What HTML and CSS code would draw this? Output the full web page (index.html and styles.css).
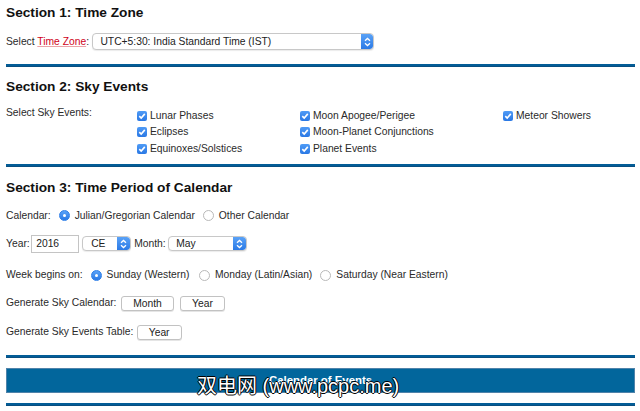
FILE: index.html
```
<!DOCTYPE html>
<html>
<head>
<meta charset="utf-8">
<link rel="stylesheet" href="styles.css">
</head>
<body>
<div class="page">
  <h2 class="h h1">Section 1: Time Zone</h2>
  <div class="row tz-row">
    <span class="txt">Select <a class="link" href="#">Time Zone</a>:</span>
    <div class="sel sel-tz"><span class="sel-text">UTC+5:30: India Standard Time (IST)</span><span class="arrow"><svg width="7" height="10" viewBox="0 0 7 10"><path d="M1 3.8 L3.5 1.5 L6 3.8 M1 6.2 L3.5 8.5 L6 6.2" fill="none" stroke="#fff" stroke-width="1.3"/></svg></span></div>
  </div>
  <div class="rule r1"></div>

  <h2 class="h h2">Section 2: Sky Events</h2>
  <div class="sky">
    <div class="sky-label txt">Select Sky Events:</div>
    <div class="sky-grid">
      <label class="cb"><span class="box"><svg width="10" height="10" viewBox="0 0 10 10"><path d="M2.3 5.1 L4.2 7 L7.8 2.9" fill="none" stroke="#fff" stroke-width="1.6"/></svg></span>Lunar Phases</label>
      <label class="cb"><span class="box"><svg width="10" height="10" viewBox="0 0 10 10"><path d="M2.3 5.1 L4.2 7 L7.8 2.9" fill="none" stroke="#fff" stroke-width="1.6"/></svg></span>Moon Apogee/Perigee</label>
      <label class="cb"><span class="box"><svg width="10" height="10" viewBox="0 0 10 10"><path d="M2.3 5.1 L4.2 7 L7.8 2.9" fill="none" stroke="#fff" stroke-width="1.6"/></svg></span>Meteor Showers</label>
      <label class="cb"><span class="box"><svg width="10" height="10" viewBox="0 0 10 10"><path d="M2.3 5.1 L4.2 7 L7.8 2.9" fill="none" stroke="#fff" stroke-width="1.6"/></svg></span>Eclipses</label>
      <label class="cb"><span class="box"><svg width="10" height="10" viewBox="0 0 10 10"><path d="M2.3 5.1 L4.2 7 L7.8 2.9" fill="none" stroke="#fff" stroke-width="1.6"/></svg></span>Moon-Planet Conjunctions</label>
      <span></span>
      <label class="cb"><span class="box"><svg width="10" height="10" viewBox="0 0 10 10"><path d="M2.3 5.1 L4.2 7 L7.8 2.9" fill="none" stroke="#fff" stroke-width="1.6"/></svg></span>Equinoxes/Solstices</label>
      <label class="cb"><span class="box"><svg width="10" height="10" viewBox="0 0 10 10"><path d="M2.3 5.1 L4.2 7 L7.8 2.9" fill="none" stroke="#fff" stroke-width="1.6"/></svg></span>Planet Events</label>
    </div>
  </div>
  <div class="rule r2"></div>

  <h2 class="h h3">Section 3: Time Period of Calendar</h2>
  <div class="row cal-row">
    <span class="txt">Calendar:</span>
    <span class="radio on"></span><span class="txt">Julian/Gregorian Calendar</span>
    <span class="radio"></span><span class="txt">Other Calendar</span>
  </div>
  <div class="row year-row">
    <span class="txt">Year:</span>
    <div class="input txt">2016</div>
    <div class="sel sel-ce"><span class="sel-text">CE</span><span class="arrow"><svg width="7" height="10" viewBox="0 0 7 10"><path d="M1 3.8 L3.5 1.5 L6 3.8 M1 6.2 L3.5 8.5 L6 6.2" fill="none" stroke="#fff" stroke-width="1.3"/></svg></span></div>
    <span class="txt month-lbl">Month:</span>
    <div class="sel sel-month"><span class="sel-text">May</span><span class="arrow"><svg width="7" height="10" viewBox="0 0 7 10"><path d="M1 3.8 L3.5 1.5 L6 3.8 M1 6.2 L3.5 8.5 L6 6.2" fill="none" stroke="#fff" stroke-width="1.3"/></svg></span></div>
  </div>
  <div class="row week-row">
    <span class="txt">Week begins on:</span>
    <span class="radio on"></span><span class="txt">Sunday (Western)</span>
    <span class="radio r-wide"></span><span class="txt">Monday (Latin/Asian)</span>
    <span class="radio"></span><span class="txt">Saturday (Near Eastern)</span>
  </div>
  <div class="row gen-row">
    <span class="txt">Generate Sky Calendar:</span>
    <span class="btn btn-month">Month</span>
    <span class="btn btn-year">Year</span>
  </div>
  <div class="row table-row">
    <span class="txt">Generate Sky Events Table:</span>
    <span class="btn btn-year">Year</span>
  </div>
  <div class="rule r3"></div>
  <div class="bar">
    <span class="bar-title">Calendar of Events</span>
    <span class="watermark">双电网 (www.pcpc.me)</span>
  </div>
  <div class="rule r4"></div>
</div>
</body>
</html>
```
FILE: styles.css
```
* { box-sizing: border-box; }
html, body { margin: 0; padding: 0; background: #fff; }
body {
  font-family: "Liberation Sans", Arial, Helvetica, sans-serif;
  color: #2a2a2a;
  width: 640px;
  height: 411px;
  overflow: hidden;
}
.page { padding: 0 5px 0 6px; }

.h {
  margin: 0;
  font-size: 13.7px;
  line-height: 16px;
  height: 16px;
  font-weight: bold;
  color: #111;
}
.h1 { margin-top: 5px; }
.h2 { margin-top: 11.75px; }
.h3 { margin-top: 13.1px; }

.txt { font-size: 10.3px; line-height: 12px; white-space: nowrap; }

.row { display: flex; align-items: center; }

.link { color: #d0021b; text-decoration: underline; text-decoration-color: #eba3a8; }

.tz-row { height: 17px; margin-top: 12px; }

.sel {
  display: flex;
  align-items: stretch;
  background: #fff;
  border: 1px solid #c8c8c8;
  border-radius: 4px;
  box-shadow: 0 1px 1px rgba(0,0,0,0.08);
  overflow: hidden;
}
.sel-text {
  flex: 1;
  font-size: 10.3px;
  line-height: 12px;
  align-self: center;
  white-space: nowrap;
  color: #222;
}
.arrow {
  width: 12px;
  background: linear-gradient(#5aa2f7, #2b7ae6);
  display: flex;
  align-items: center;
  justify-content: center;
  border-radius: 0 3px 3px 0;
}
.sel-tz { margin-left: 3.4px; width: 282px; height: 17px; }
.sel-tz .sel-text { padding-left: 7px; }
.sel-ce { margin-left: 3px; width: 49px; height: 15px; }
.sel-ce .sel-text { padding-left: 8px; }
.sel-month { margin-left: 2.5px; width: 79px; height: 15px; }
.sel-month .sel-text { padding-left: 7px; }
.sel-ce .arrow, .sel-month .arrow { width: 13px; }

.rule { height: 3px; background: #035d97; border-bottom: 1px solid #0a4f80; }
.r1 { margin-top: 14px; }
.r2 { margin-top: 8px; }
.r3 { margin-top: 15px; }
.r4 { margin-top: 10px; }

.sky { display: flex; margin-top: 12.15px; }
.sky-label { width: 131px; line-height: 12.5px; }
.sky-grid {
  display: grid;
  grid-template-columns: 163px 203px auto;
  grid-auto-rows: 16.5px;
}
.cb {
  display: flex;
  align-items: center;
  font-size: 10.3px;
  white-space: nowrap;
}
.box {
  width: 10px;
  height: 10px;
  border-radius: 2px;
  background: linear-gradient(#4f9bf6, #2a78e4);
  margin-right: 3px;
  display: flex;
  margin-top: 1px;
}

.radio {
  width: 11px;
  height: 11px;
  border-radius: 50%;
  border: 1px solid #b9b9b9;
  background: #fff;
  margin: 0 5px 0 8px;
  flex: none;
  position: relative;
}
.radio.on {
  border-color: #2f7fe8;
  background: linear-gradient(#5aa2f7, #2b7ae6);
}
.radio.on::after {
  content: "";
  position: absolute;
  left: 3px; top: 3px;
  width: 3px; height: 3px;
  border-radius: 50%;
  background: #fff;
}
.cal-row .radio:first-of-type { margin-left: 7.3px; }
.r-wide { margin-left: 9.7px; }

.cal-row { height: 14px; margin-top: 12.5px; }
.year-row { height: 18px; margin-top: 12px; }
.input {
  margin-left: 1.5px;
  width: 48px;
  height: 18px;
  border: 1px solid #c4c4c4;
  padding-left: 4px;
  display: flex;
  align-items: center;
  color: #222;
}
.month-lbl { margin-left: 3px; }
.week-row { height: 14px; margin-top: 15.5px; }
.week-row .radio:first-of-type { margin-left: 7.3px; }

.gen-row { height: 15px; margin-top: 13.5px; }
.table-row { height: 15px; margin-top: 14px; }
.btn {
  height: 15px;
  border: 1px solid #c2c2c2;
  border-radius: 3px;
  background: #fff;
  box-shadow: 0 1px 0 rgba(0,0,0,0.1);
  font-size: 10.3px;
  line-height: 13px;
  text-align: center;
  color: #222;
  margin-left: 4.5px;
}
.btn-month { width: 53px; }
.btn-year { width: 45px; }
.gen-row .btn-year { margin-left: 6px; }
.table-row .btn-year { margin-left: 3.2px; }

.bar {
  position: relative;
  margin-top: 10px;
  height: 25px;
  background: #02669c;
  border: 1px solid #4f83aa;
  display: flex;
  align-items: center;
  justify-content: center;
}
.bar-title {
  color: #fff;
  font-weight: bold;
  font-size: 11.4px;
  line-height: 12px;
  margin-top: -1px;
}
.watermark {
  position: absolute;
  left: 190px;
  top: 6px;
  font-family: "Liberation Sans", "Noto Sans CJK SC", sans-serif;
  font-size: 20px;
  line-height: 22px;
  color: #fff;
  white-space: nowrap;
  text-shadow: -1px 0 0 #000, 1px 0 0 #000, 0 -1px 0 #000, 0 1px 0 #000;
}
```
